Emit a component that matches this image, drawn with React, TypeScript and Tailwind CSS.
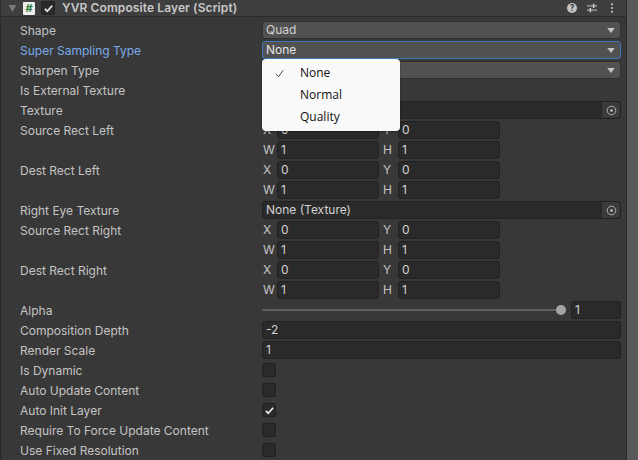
import type { ReactNode } from "react";

const font = { fontFamily: "Inter" };

function Arrow() {
  return (
    <svg viewBox="0 0 9 6" className="h-[5px] w-[8px] fill-[#c4c4c4]">
      <path d="M0 0h9L4.5 6z" />
    </svg>
  );
}

function Dropdown({ value, focused }: { value?: string; focused?: boolean }) {
  return (
    <div
      className={
        focused
          ? "flex h-[18px] flex-1 items-center justify-between rounded-[3px] border border-[#3a79bb] bg-[#515151] pl-[3px] pr-[5px] text-[#e4e4e4]"
          : "flex h-[18px] flex-1 items-center justify-between rounded-[3px] border border-[#303030] bg-[#515151] pl-[3px] pr-[5px] text-[#d2d2d2]"
      }
    >
      <span>{value}</span>
      <Arrow />
    </div>
  );
}

function Field({ value, className }: { value: string; className: string }) {
  return (
    <div className={`flex h-[18px] items-center rounded-[3px] border border-[#212121] bg-[#2a2a2a] pl-[3px] text-[#d2d2d2] ${className}`}>
      {value}
    </div>
  );
}

function ObjectField({ value }: { value?: string }) {
  return (
    <div className="flex h-[18px] flex-1 items-center justify-between rounded-[3px] border border-[#212121] bg-[#2a2a2a] pl-[3px] text-[#d2d2d2]">
      <span>{value}</span>
      <div className="flex h-full w-[18px] items-center justify-center rounded-r-[3px] bg-[#3a3a3a]">
        <svg viewBox="0 0 12 12" className="size-[11px] fill-none stroke-[#bdbdbd]">
          <circle cx="6" cy="6" r="4.7" strokeWidth="1" />
          <circle cx="6" cy="6" r="1.5" fill="#bdbdbd" stroke="none" />
        </svg>
      </div>
    </div>
  );
}

function Check() {
  return (
    <svg viewBox="0 0 12 12" className="size-[11px] fill-none stroke-[#e6e6e6]" strokeWidth="2">
      <path d="M2 6.5 4.6 9 10 3" />
    </svg>
  );
}

function Toggle({ checked }: { checked?: boolean }) {
  return (
    <div className="flex size-[14px] items-center justify-center rounded-[2px] border border-[#212121] bg-[#2a2a2a]">
      {checked ? <Check /> : null}
    </div>
  );
}

function Row({ label, active, children }: { label?: string; active?: boolean; children?: ReactNode }) {
  return (
    <div className="flex h-[20px] items-center">
      <div className={active ? "w-[261px] pl-[19px] text-[#7babea]" : "w-[261px] pl-[19px] text-[#c4c4c4]"}>{label}</div>
      <div className="flex flex-1 items-center pb-[2px]">{children}</div>
    </div>
  );
}

function Pair({ label, a, b, v1, v2 }: { label?: string; a: string; b: string; v1: string; v2: string }) {
  return (
    <Row label={label}>
      <div className="flex w-[238px] items-center text-[#c4c4c4]">
        <span className="w-[15px] pl-[1px]">{a}</span>
        <Field value={v1} className="w-[102px]" />
        <span className="w-[19px] pl-[4px]">{b}</span>
        <Field value={v2} className="w-[102px]" />
      </div>
    </Row>
  );
}

function Rect({ label, x, y, w, h }: { label: string; x: string; y: string; w: string; h: string }) {
  return (
    <>
      <Pair label={label} a="X" b="Y" v1={x} v2={y} />
      <Pair a="W" b="H" v1={w} v2={h} />
    </>
  );
}

export default function App() {
  return (
    <div className="relative flex h-[460px] w-[638px] overflow-hidden bg-[#383838] text-[12px]" style={font}>
      <div className="flex min-w-0 flex-1 flex-col border-l border-[#2a2a2a]">
        {/* component header */}
        <div className="flex h-[17px] items-center border-b border-[#2b2b2b] bg-[#3e3e3e]">
          <svg viewBox="0 0 9 8" className="ml-[7px] h-[7px] w-[9px] fill-[#7a7a7a]">
            <path d="M0 0h9L4.5 8z" />
          </svg>
          <div className="ml-[6px] flex h-[13px] w-[12px] items-center justify-center rounded-[1px] bg-[#f0f0f0] text-[11px] font-bold text-[#2f7d46]">
            #
          </div>
          <div className="ml-[6px] flex size-[14px] items-center justify-center rounded-[2px] border border-[#222] bg-[#2a2a2a]">
            <Check />
          </div>
          <span className="ml-[7px] font-semibold tracking-[0.1px] text-[#c8c8c8]">YVR Composite Layer (Script)</span>
          <div className="ml-auto mr-[12px] flex items-center">
            <svg viewBox="0 0 12 12" className="size-[10px]">
              <circle cx="6" cy="6" r="6" fill="#c4c4c4" />
              <text x="6" y="9.6" textAnchor="middle" fontSize="10" fontWeight="700" fill="#3e3e3e">?</text>
            </svg>
            <svg viewBox="0 0 12 12" className="ml-[10px] size-[10px] stroke-[#c4c4c4]" strokeWidth="1.2">
              <path d="M0 3.5h12M0 8.5h12" />
              <path d="M8 1v5M4 6v5" strokeWidth="2" />
            </svg>
            <svg viewBox="0 0 4 12" className="ml-[13px] h-[10px] w-[4px] fill-[#c4c4c4]">
              <circle cx="2" cy="1.5" r="1.3" />
              <circle cx="2" cy="6" r="1.3" />
              <circle cx="2" cy="10.5" r="1.3" />
            </svg>
          </div>
        </div>

        {/* property rows */}
        <div className="flex flex-col pr-[5px] pt-[4px]">
          <Row label="Shape"><Dropdown value="Quad" /></Row>
          <Row label="Super Sampling Type" active><Dropdown value="None" focused /></Row>
          <Row label="Sharpen Type"><Dropdown /></Row>
          <Row label="Is External Texture" />
          <Row label="Texture"><ObjectField /></Row>
          <Rect label="Source Rect Left" x="0" y="0" w="1" h="1" />
          <Rect label="Dest Rect Left" x="0" y="0" w="1" h="1" />
          <Row label="Right Eye Texture"><ObjectField value="None (Texture)" /></Row>
          <Rect label="Source Rect Right" x="0" y="0" w="1" h="1" />
          <Rect label="Dest Rect Right" x="0" y="0" w="1" h="1" />
          <Row label="Alpha">
            <div className="relative flex h-[18px] flex-1 items-center">
              <div className="h-[2px] w-full rounded bg-[#5e5e5e]" />
              <div className="absolute right-0 size-[10px] rounded-full bg-[#a5a5a5]" />
            </div>
            <Field value="1" className="ml-[5px] w-[50px]" />
          </Row>
          <Row label="Composition Depth"><Field value="-2" className="flex-1" /></Row>
          <Row label="Render Scale"><Field value="1" className="flex-1" /></Row>
          <Row label="Is Dynamic"><Toggle /></Row>
          <Row label="Auto Update Content"><Toggle /></Row>
          <Row label="Auto Init Layer"><Toggle checked /></Row>
          <Row label="Require To Force Update Content"><Toggle /></Row>
          <Row label="Use Fixed Resolution"><Toggle /></Row>
        </div>
      </div>

      {/* scrollbar strip */}
      <div className="w-[12px] shrink-0 border-l border-[#2b2b2b] bg-[#5a5a5a]" />

      {/* open dropdown menu */}
      <div className="absolute left-[262px] top-[59px] w-[138px] rounded-[4px] bg-[#f9f9f9] py-[3px] text-[#111] shadow-[0_1px_2px_rgba(0,0,0,0.35)]" style={{ fontFamily: "Open Sans" }}>
        {["None", "Normal", "Quality"].map((item, i) => (
          <div key={item} className="relative flex h-[22px] items-center pl-[38px]">
            {i === 0 ? (
              <svg viewBox="0 0 10 10" className="absolute left-[13px] size-[9px] fill-none stroke-[#333]" strokeWidth="1">
                <path d="M1 5.5 4 8.5 9 1.5" />
              </svg>
            ) : null}
            {item}
          </div>
        ))}
      </div>
    </div>
  );
}
